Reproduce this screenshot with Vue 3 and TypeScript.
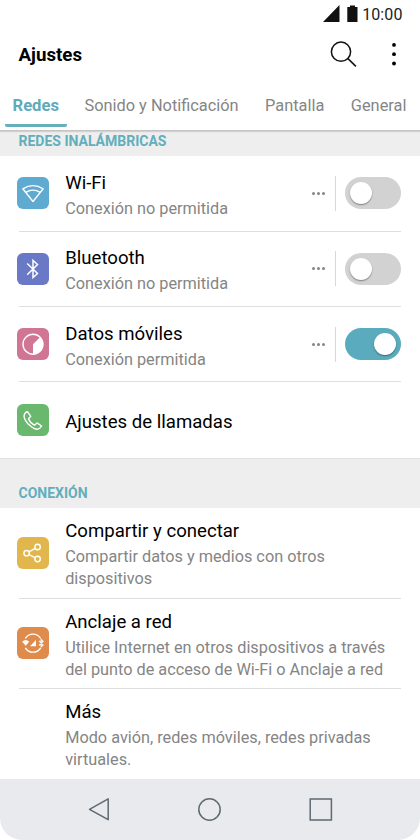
<script setup lang="ts">
type IconName = 'wifi' | 'bluetooth' | 'data' | 'call' | 'share' | 'tether'

interface Row {
  title: string
  lines: string[]
  icon?: IconName
  toggle?: 'on' | 'off'
}

interface Section {
  label: string
  kind: string
  rows: Row[]
}

const tabs: string[] = ['Redes', 'Sonido y Notificación', 'Pantalla', 'General']

const sections: Section[] = [
  {
    label: 'REDES INALÁMBRICAS',
    kind: 'first',
    rows: [
      { title: 'Wi-Fi', lines: ['Conexión no permitida'], icon: 'wifi', toggle: 'off' },
      { title: 'Bluetooth', lines: ['Conexión no permitida'], icon: 'bluetooth', toggle: 'off' },
      { title: 'Datos móviles', lines: ['Conexión permitida'], icon: 'data', toggle: 'on' },
      { title: 'Ajustes de llamadas', lines: [], icon: 'call' },
    ],
  },
  {
    label: 'CONEXIÓN',
    kind: 'second',
    rows: [
      { title: 'Compartir y conectar', lines: ['Compartir datos y medios con otros', 'dispositivos'], icon: 'share' },
      {
        title: 'Anclaje a red',
        lines: ['Utilice Internet en otros dispositivos a través', 'del punto de acceso de Wi-Fi o Anclaje a red'],
        icon: 'tether',
      },
      { title: 'Más', lines: ['Modo avión, redes móviles, redes privadas', 'virtuales.'] },
    ],
  },
]
</script>

<template>
  <div class="screen">
    <div class="status">
      <svg class="signal" width="17" height="17" viewBox="0 0 17 17"><path d="M0 17 16.5 0V17Z" fill="#111" /></svg>
      <svg class="battery" width="11" height="17" viewBox="0 0 11 17"><path d="M3 .5h5V2h2.500V17H.3V2H3Z" fill="#111" /></svg>
      <span class="clock">10:00</span>
    </div>

    <header class="header">
      <h1>Ajustes</h1>
      <svg class="search" width="28" height="28" viewBox="0 0 28 28" fill="none" stroke="#111" stroke-width="1.5">
        <circle cx="11" cy="10.700" r="9.600" />
        <path d="m17.700 17.400 8.200 8" />
      </svg>
      <svg class="more" width="6" height="24" viewBox="0 0 6 24" fill="#000">
        <circle cx="3" cy="1.900" r="1.900" /><circle cx="3" cy="11.200" r="1.900" /><circle cx="3" cy="20.500" r="1.900" />
      </svg>
    </header>

    <nav class="tabs">
      <div v-for="(tab, i) in tabs" :key="tab" class="tab" :class="{ active: i === 0 }">{{ tab }}</div>
    </nav>

    <section v-for="section in sections" :key="section.label">
      <h2 class="label" :class="section.kind">{{ section.label }}</h2>
      <div class="list" :class="section.kind">
        <div v-for="row in section.rows" :key="row.title" class="row">
          <div class="icon" :class="row.icon">
            <svg v-if="row.icon" width="32" height="32" viewBox="0 0 32 32" fill="none" stroke="#fff" stroke-width="1.4" stroke-linejoin="round">
              <template v-if="row.icon === 'wifi'">
                <path d="M5.800 11.800Q16 5.500 26.200 11.800L16 24.500Z" />
                <path d="M8.900 15.400Q16 10.800 23.100 15.400" />
              </template>
              <path v-else-if="row.icon === 'bluetooth'" d="m10.200 10.500 10.300 10-4.500 4V7.500l4.500 4-10.300 10.200" stroke-width="1.500" stroke-linejoin="miter" />
              <template v-else-if="row.icon === 'data'">
                <circle cx="16" cy="16.200" r="10" />
                <path d="M16 16.200 23 9.200A10 10 0 0 1 16 26.200Z" fill="#fff" stroke="none" />
              </template>
              <path
                v-else-if="row.icon === 'call'"
                d="M9.200 8 7.500 10C5.800 13.500 9.500 18.800 13.200 21.800 16.500 24.600 20.800 26.300 23 23.900L24.600 22 20 18.900 17.400 21.200C14.800 20 12.400 17.200 11.500 14.800L13.800 12.300 10.600 7.800Z"
              />
              <template v-else-if="row.icon === 'share'">
                <circle cx="9.600" cy="16.200" r="2.700" /><circle cx="20.600" cy="10" r="2.700" /><circle cx="20.600" cy="22" r="2.700" />
                <path d="m12 14.900 6.200-3.500M12 17.500l6.200 3.300" />
              </template>
              <template v-else>
                <path d="M8.300 11.500a9 9 0 0 1 15.400 0M8.300 20.800a9 9 0 0 0 15.400 0" />
                <path d="M5.200 14.700q3.500-3.400 7 0L8.700 18.800ZM13 19.300 19 13v6.300Z" fill="#fff" stroke="none" />
                <path d="m22 13.800 4.200 4-2.100 2v-7.400l2.100 1.900-4.200 4" stroke-width="1.100" />
              </template>
            </svg>
          </div>
          <div class="body">
            <div class="text">
              <div class="title">{{ row.title }}</div>
              <div v-for="line in row.lines" :key="line" class="sub">{{ line }}</div>
            </div>
            <template v-if="row.toggle">
              <div class="dots"><i></i><i></i><i></i></div>
              <div class="switch-cell">
                <div class="switch" :class="row.toggle"><div class="knob"></div></div>
              </div>
            </template>
          </div>
        </div>
      </div>
    </section>

    <footer class="navbar">
      <svg width="420" height="60" viewBox="0 0 420 60" fill="none" stroke="#5e6a73" stroke-width="1.500">
        <path d="M108.200 18.900v20.800L89.500 29.300Z" stroke-linejoin="round" />
        <circle cx="209.500" cy="29.500" r="10.700" />
        <path d="M310.200 18.900h21.200v21.200h-21.200Z" />
      </svg>
    </footer>
  </div>
</template>

<style>
body {
  margin: 0;
  background: #fff;
}
</style>

<style scoped>
.screen {
  width: 420px;
  height: 840px;
  overflow: hidden;
  background: #fff;
  color: #000;
  font-family: Roboto, 'Liberation Sans', sans-serif;
  display: flex;
  flex-direction: column;
}
.status {
  height: 30px;
  box-sizing: border-box;
  padding: 5px 17.500px 0 0;
  display: flex;
  justify-content: flex-end;
  align-items: flex-start;
}
.signal { margin: 0 7px 0 0; }
.battery { margin-right: 4px; }
.clock {
  font-size: 16px;
  line-height: 20px;
  letter-spacing: 0.1px;
  color: #222;
}
.header {
  height: 50px;
  display: flex;
  align-items: center;
  padding: 0 23px 0 18.500px;
}
h1 {
  flex: 1;
  margin: 0;
  font-size: 18.700px;
  font-weight: 700;
}
.search { margin-right: 33px; }
.tabs {
  height: 51.500px;
  margin-bottom: -0.500px;
  display: flex;
  box-sizing: border-box;
  padding: 0 0 3px 5px;
  border-bottom: 1px solid #c4c4c4;
  box-shadow: 0 1px 1px rgba(0, 0, 0, 0.12);
  position: relative;
  z-index: 1;
  font-size: 16.350px;
  color: #858585;
  white-space: nowrap;
}
.tab {
  flex: none;
  box-sizing: border-box;
  padding-top: 16px;
  line-height: 20px;
  margin-right: 26.500px;
}
.tab.active {
  width: 62px;
  margin-right: 17.500px;
  padding-left: 7.500px;
  color: #5eabba;
  font-weight: 700;
  font-size: 16.600px;
  border-bottom: 3px solid #67afbd;
  border-radius: 2px;
}
.label {
  box-sizing: border-box;
  margin: 0;
  padding-left: 18.500px;
  background: #eee;
  color: #62aebc;
  font-size: 14px;
  line-height: 18px;
  font-weight: 700;
}
.label.first { height: 25px; padding-top: 1px; }
.label.second { height: 50px; padding-top: 25px; border-top: 1px solid #e2e2e2; }
.row {
  display: flex;
  align-items: center;
  padding: 0 19px 0 16.700px;
  box-sizing: border-box;
  position: relative;
}
.row:not(:last-child)::after {
  content: '';
  position: absolute;
  left: 19px;
  right: 19px;
  bottom: -0.700px;
  height: 1px;
  background: #dedede;
}
.first .row { height: 75.400px; }
.first .row:last-child { height: 75.800px; }
.second .row { height: 90.500px; }
.icon {
  width: 32px;
  height: 32px;
  flex: none;
  border-radius: 6px;
  margin-right: 16.500px;
}
.icon svg { display: block; }
.wifi { background: #5faad0; }
.bluetooth { background: #6979c5; }
.data { background: #d07694; }
.call { background: #6ab76e; }
.share { background: #e1b64c; }
.tether { background: #df8b4c; }
.body {
  flex: 1;
  display: flex;
  align-items: center;
}
.text {
  flex: 1;
  white-space: nowrap;
  padding-top: 4px;
}
.title {
  font-size: 18.600px;
  line-height: 24px;
}
.sub {
  color: #858585;
  font-size: 16.270px;
  line-height: 22px;
}
.title + .sub { margin-top: 3px; }
.dots {
  display: flex;
  gap: 2px;
  margin-right: 10px;
}
.dots i {
  width: 3px;
  height: 3px;
  border-radius: 50%;
  background: #858585;
}
.switch-cell {
  border-left: 1px solid #d8d8d8;
  height: 35px;
  display: flex;
  align-items: center;
  padding-left: 9px;
}
.switch {
  width: 56px;
  height: 32px;
  box-sizing: border-box;
  padding: 0 5px;
  border-radius: 16px;
  background: #d2d2d2;
  display: flex;
  align-items: center;
}
.switch.on { background: #5aabbd; justify-content: flex-end; }
.knob {
  width: 22px;
  height: 22px;
  border-radius: 50%;
  background: #fff;
  box-shadow: 0 1px 1.500px rgba(0, 0, 0, 0.4);
}
.navbar {
  margin-top: auto;
  height: 61px;
  flex: none;
  box-sizing: border-box;
  padding-top: 1px;
  background: #e8eaed;
  border-radius: 0 0 22px 22px;
}
.navbar svg { display: block; }
</style>
